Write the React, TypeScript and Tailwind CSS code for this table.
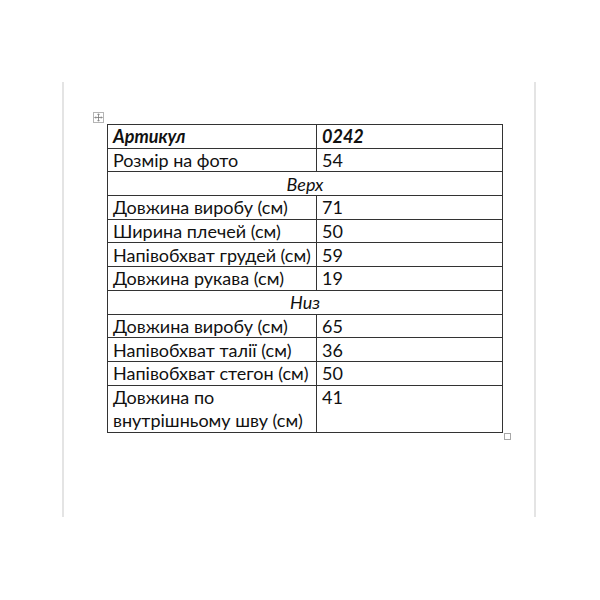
const rows: { label: string; value: string; bold?: boolean }[] = [
  { label: 'Артикул', value: '0242', bold: true },
  { label: 'Розмір на фото', value: '54' },
];

const top = [
  { label: 'Довжина виробу (см)', value: '71' },
  { label: 'Ширина плечей (см)', value: '50' },
  { label: 'Напівобхват грудей (см)', value: '59' },
  { label: 'Довжина рукава (см)', value: '19' },
];

const bottom = [
  { label: 'Довжина виробу (см)', value: '65' },
  { label: 'Напівобхват талії (см)', value: '36' },
  { label: 'Напівобхват стегон (см)', value: '50' },
];

function Row({ label, value, bold }: { label: string; value: string; bold?: boolean }) {
  const txt = bold ? 'font-bold italic' : '';
  return (
    <tr className="h-[23.7px]">
      <td className={`border border-[#333] w-[209px] pl-[5px] leading-none ${txt}`}>{label}</td>
      <td className={`border border-[#333] pl-[5px] leading-none ${txt}`}>{value}</td>
    </tr>
  );
}

function Section({ title }: { title: string }) {
  return (
    <tr className="h-[23.7px]">
      <td colSpan={2} className="border border-[#333] text-center italic leading-none">
        {title}
      </td>
    </tr>
  );
}

export default function App() {
  return (
    <div className="w-[600px] h-[600px] bg-white overflow-hidden pt-[82px] pl-[62px]">
      <div className="w-[474px] h-[435px] border-x-2 border-[#e4e4e4] pt-[42px] pl-[43px]">
        <div className="relative w-[396px]">
          <div className="absolute -left-[14px] -top-[12px] w-[11px] h-[11px] border border-[#b5b5b5] bg-white flex items-center justify-center">
            <svg width="9" height="9" viewBox="0 0 9 9" fill="none" stroke="#777" strokeWidth="0.8">
              <path d="M4.5 0.8v7.4M0.8 4.5h7.4" />
              <path d="M3.5 1.8l1-1 1 1M3.5 7.2l1 1 1-1M1.8 3.5l-1 1 1 1M7.2 3.5l1 1-1 1" />
            </svg>
          </div>
          <table
            className="w-[396px] border-collapse text-[18px] text-[#111]"
            style={{ fontFamily: 'Lato, "Open Sans", sans-serif' }}
          >
            <tbody>
              {rows.map((r) => (
                <Row key={r.label} {...r} />
              ))}
              <Section title="Верх" />
              {top.map((r) => (
                <Row key={r.label} {...r} />
              ))}
              <Section title="Низ" />
              {bottom.map((r) => (
                <Row key={r.label + r.value} {...r} />
              ))}
              <tr className="h-[47px]">
                <td className="border border-[#333] pl-[5px] align-top leading-[23px]">
                  Довжина по
                  <br />
                  внутрішньому шву (см)
                </td>
                <td className="border border-[#333] pl-[5px] align-top leading-[23px]">41</td>
              </tr>
            </tbody>
          </table>
          <div className="absolute -right-[8px] -bottom-[7px] w-[7px] h-[7px] border border-[#a8a8a8] bg-white" />
        </div>
      </div>
    </div>
  );
}
